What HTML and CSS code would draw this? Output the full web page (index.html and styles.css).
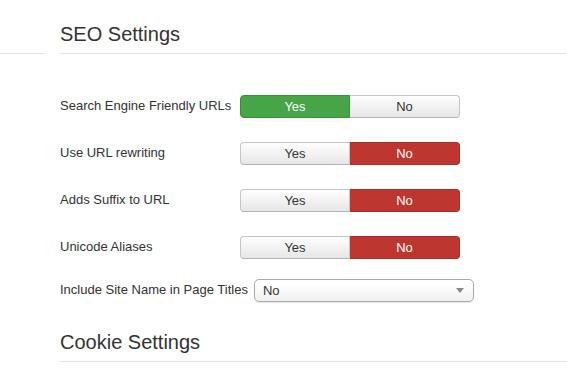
FILE: index.html
```html
<!DOCTYPE html>
<html lang="en">
<head>
    <meta charset="UTF-8">
    <meta name="viewport" content="width=device-width, initial-scale=1.0">
    <title>SEO Settings</title>
    <link rel="stylesheet" href="styles.css">
</head>
<body>
    <div class="page">
        <div class="side"><div class="side-line"></div></div>
        <div class="main">
            <h2 class="legend">SEO Settings</h2>

            <div class="control-group">
                <label class="control-label">Search Engine Friendly URLs</label>
                <div class="btn-group">
                    <span class="btn yes active">Yes</span>
                    <span class="btn no">No</span>
                </div>
            </div>

            <div class="control-group">
                <label class="control-label">Use URL rewriting</label>
                <div class="btn-group">
                    <span class="btn yes">Yes</span>
                    <span class="btn no active">No</span>
                </div>
            </div>

            <div class="control-group">
                <label class="control-label">Adds Suffix to URL</label>
                <div class="btn-group">
                    <span class="btn yes">Yes</span>
                    <span class="btn no active">No</span>
                </div>
            </div>

            <div class="control-group tight">
                <label class="control-label">Unicode Aliases</label>
                <div class="btn-group">
                    <span class="btn yes">Yes</span>
                    <span class="btn no active">No</span>
                </div>
            </div>

            <div class="control-group">
                <label class="control-label">Include Site Name in Page Titles</label>
                <div class="select">
                    <span>No</span>
                    <span class="arrow"></span>
                </div>
            </div>

            <h2 class="legend second">Cookie Settings</h2>
        </div>
    </div>
</body>
</html>
```

FILE: styles.css
```css
body {
    margin: 0;
    font-family: "Liberation Sans", Arial, sans-serif;
    font-size: 13px;
    color: #333;
    background: #fff;
}
.page {
    display: flex;
}
.side {
    width: 45px;
    flex-shrink: 0;
}
.side-line {
    height: 53px;
    border-bottom: 1px solid #e5e5e5;
}
.main {
    flex: 1;
    padding-left: 15px;
}
.legend {
    margin: 22px 0 41px;
    padding-bottom: 7px;
    font-size: 20px;
    line-height: 24px;
    font-weight: normal;
    color: #333;
    border-bottom: 1px solid #e5e5e5;
}
.legend.second {
    margin: 28px 0 0;
}
.control-group {
    display: flex;
    align-items: flex-start;
    margin-bottom: 24px;
}
.control-group.tight {
    margin-bottom: 20px;
}
.control-label {
    min-width: 174px;
    margin-right: 6px;
    padding-top: 2px;
    line-height: 18px;
    white-space: nowrap;
}
.btn-group {
    display: flex;
    width: 220px;
}
.btn {
    box-sizing: border-box;
    width: 110px;
    height: 23px;
    line-height: 21px;
    text-align: center;
    border: 1px solid #c5c5c5;
    border-bottom-color: #b3b3b3;
    background: linear-gradient(#ffffff, #e6e6e6);
    color: #333;
}
.btn.yes {
    border-radius: 4px 0 0 4px;
}
.btn.no {
    border-radius: 0 4px 4px 0;
    border-left: none;
}
.btn.yes.active {
    background: #46a546;
    border-color: #3b8f3b;
    color: #fff;
}
.btn.no.active {
    background: #bd362f;
    border-color: #a52f29;
    color: #fff;
}
.select {
    box-sizing: border-box;
    display: flex;
    align-items: center;
    justify-content: space-between;
    width: 220px;
    height: 23px;
    padding: 0 9px 0 8px;
    border: 1px solid #aaa;
    border-radius: 5px;
    background: linear-gradient(#ffffff 20%, #f0f0f0);
    box-shadow: 0 1px 1px rgba(0, 0, 0, 0.1);
}
.arrow {
    width: 0;
    height: 0;
    border-left: 4px solid transparent;
    border-right: 4px solid transparent;
    border-top: 5px solid #888;
}
```
